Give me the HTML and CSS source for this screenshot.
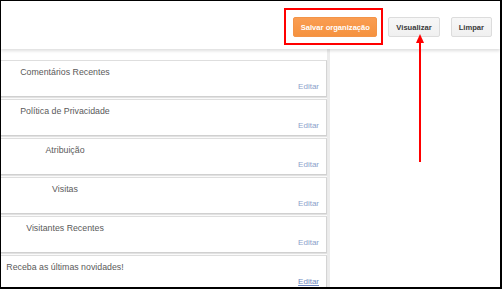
FILE: index.html
```html
<!DOCTYPE html>
<html lang="pt">
<head>
  <meta charset="UTF-8">
  <title>Layout</title>
  <link rel="stylesheet" href="styles.css">
</head>
<body>
<div class="screen">
  <div class="topbar">
    <button class="btn btn-save" type="button">Salvar organização</button>
    <button class="btn" type="button">Visualizar</button>
    <button class="btn" type="button">Limpar</button>
  </div>

  <div class="column">
    <div class="widget"><div class="widget-title">Comentários Recentes</div><a class="widget-edit" href="#">Editar</a></div>
    <div class="widget"><div class="widget-title">Política de Privacidade</div><a class="widget-edit" href="#">Editar</a></div>
    <div class="widget"><div class="widget-title">Atribuição</div><a class="widget-edit" href="#">Editar</a></div>
    <div class="widget"><div class="widget-title">Visitas</div><a class="widget-edit" href="#">Editar</a></div>
    <div class="widget"><div class="widget-title">Visitantes Recentes</div><a class="widget-edit" href="#">Editar</a></div>
    <div class="widget"><div class="widget-title">Receba as últimas novidades!</div><a class="widget-edit hover" href="#">Editar</a></div>
  </div>

  <!-- annotations drawn over the screenshot -->
  <div class="mark-box"></div>
  <svg class="mark-arrow" width="10" height="130" viewBox="0 0 10 130">
    <polygon points="5,0 1,9 9,9" fill="#f00"/>
    <rect x="4" y="8" width="2" height="120" fill="#f00"/>
  </svg>
</div>
</body>
</html>
```

FILE: styles.css
```css
* { box-sizing: border-box; }
body { margin: 0; background: #fff; font-family: "Liberation Sans", Arial, sans-serif; }

.screen { position: relative; width: 502px; height: 289px; border: 1px solid #000; border-right-width: 2px; border-bottom-width: 2px; overflow: hidden; background: #fff; }

.topbar { position: relative; z-index: 1; height: 48px; display: flex; justify-content: flex-end; align-items: flex-start; gap: 11px; padding: 16px 8px 0 0; background: #fff; box-shadow: 0 2px 3px rgba(0,0,0,0.13); }
.btn { height: 20px; padding: 0 7px; border: 1px solid #dcdcdc; border-radius: 2px; background: linear-gradient(#f7f7f7, #f0f0f0); color: #3a3a3a; font: bold 7.6px "Liberation Sans", Arial, sans-serif; cursor: pointer; }
.btn-save { width: 84px; padding: 0; border-color: #f39448; background: linear-gradient(#fa9d52, #f5923f); color: #fff; }

.column { width: 329px; height: 240px; padding-top: 11px; border-right: 3px solid #ececec; }
.widget { height: 37px; margin-bottom: 2px; display: flex; flex-direction: column; border-top: 1px solid #dedede; border-right: 1px solid #d4d4d4; border-bottom: 1px solid #d0d0d0; box-shadow: 0 1px 1px #e2e2e2; background: #fff; }
.widget-title { width: 128px; padding-top: 5px; line-height: 12px; text-align: center; font-size: 8.8px; color: #5a5a5a; white-space: nowrap; }
.widget-edit { align-self: flex-end; margin: 4px 7px 0 0; line-height: 10px; font-size: 8px; color: #8c9fcb; text-decoration: none; }
.widget-edit.hover { color: #6e87c0; text-decoration: underline; }

.mark-box { position: absolute; left: 283px; top: 7px; width: 99px; height: 37px; border: 2px solid #f00; z-index: 2; }
.mark-arrow { position: absolute; left: 414px; top: 33px; z-index: 2; }
```
